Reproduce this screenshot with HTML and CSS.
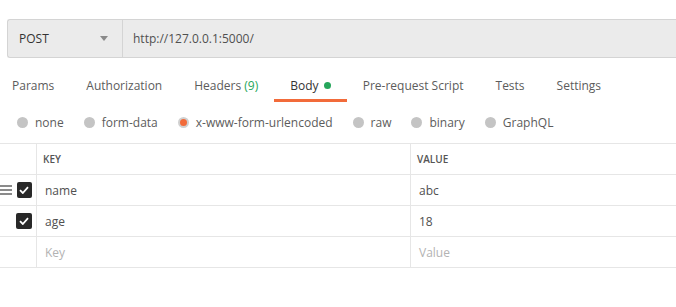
FILE: index.html
```html
<!DOCTYPE html>
<html lang="en">
<head>
    <meta charset="UTF-8">
    <meta name="viewport" content="width=device-width, initial-scale=1.0">
    <title>Request Body</title>
    <link rel="stylesheet" href="styles.css">
</head>
<body>

    <div class="url-bar">
        <div class="method">
            <span>POST</span>
            <span class="caret"></span>
        </div>
        <div class="url">http://127.0.0.1:5000/</div>
    </div>

    <div class="tabs">
        <div class="tab">Params</div>
        <div class="tab">Authorization</div>
        <div class="tab">Headers <span class="count">(9)</span></div>
        <div class="tab active">Body <span class="dot"></span></div>
        <div class="tab">Pre-request Script</div>
        <div class="tab">Tests</div>
        <div class="tab">Settings</div>
    </div>

    <div class="body-types">
        <label class="radio"><span class="circle"></span>none</label>
        <label class="radio"><span class="circle"></span>form-data</label>
        <label class="radio"><span class="circle selected"></span>x-www-form-urlencoded</label>
        <label class="radio"><span class="circle"></span>raw</label>
        <label class="radio"><span class="circle"></span>binary</label>
        <label class="radio"><span class="circle"></span>GraphQL</label>
    </div>

    <div class="kv-table">
        <div class="cell check"></div>
        <div class="cell head">KEY</div>
        <div class="cell head last">VALUE</div>

        <div class="cell check">
            <span class="drag"><i></i><i></i><i></i></span>
            <span class="box">
                <svg width="10" height="8" viewBox="0 0 10 8"><path d="M1 4.2 L3.8 7 L9 1.2" fill="none" stroke="#fff" stroke-width="1.8"/></svg>
            </span>
        </div>
        <div class="cell">name</div>
        <div class="cell last">abc</div>

        <div class="cell check">
            <span class="box">
                <svg width="10" height="8" viewBox="0 0 10 8"><path d="M1 4.2 L3.8 7 L9 1.2" fill="none" stroke="#fff" stroke-width="1.8"/></svg>
            </span>
        </div>
        <div class="cell">age</div>
        <div class="cell last">18</div>

        <div class="cell check"></div>
        <div class="cell placeholder">Key</div>
        <div class="cell placeholder last">Value</div>
    </div>

</body>
</html>
```

FILE: styles.css
```css
body {
    font-family: 'Open Sans', sans-serif;
    font-size: 12px;
    background-color: #fff;
    color: #505050;
    margin: 0;
    padding: 0;
    overflow: hidden;
}

.url-bar {
    display: flex;
    height: 37px;
    margin: 19px 0 0 7px;
    background-color: #ebebeb;
    border: 1px solid #d4d4d4;
    border-right: none;
    border-radius: 3px 0 0 3px;
}

.method {
    display: flex;
    align-items: center;
    justify-content: space-between;
    width: 115px;
    padding: 0 14px 0 11px;
    box-sizing: border-box;
    border-right: 1px solid #d4d4d4;
    color: #333;
}

.caret {
    width: 0;
    height: 0;
    border-left: 4px solid transparent;
    border-right: 4px solid transparent;
    border-top: 5px solid #8a8a8a;
}

.url {
    display: flex;
    align-items: center;
    padding-left: 10px;
}

.tabs {
    display: flex;
    margin-top: 15px;
    height: 29px;
}

.tab {
    padding: 0 16px;
    line-height: 26px;
    color: #5c5c5c;
    border-bottom: 3px solid transparent;
}

    .tab:first-child {
        padding-left: 12px;
    }

    .tab.active {
        color: #333;
        border-bottom-color: #f26b3a;
    }

.count {
    color: #26a65b;
}

.dot {
    display: inline-block;
    width: 7px;
    height: 7px;
    margin-left: 2px;
    border-radius: 50%;
    background-color: #26a65b;
    vertical-align: 1px;
}

.body-types {
    display: flex;
    align-items: center;
    height: 41px;
    padding-left: 17px;
}

.radio {
    display: flex;
    align-items: center;
    margin-right: 20px;
    color: #5c5c5c;
}

.circle {
    width: 11px;
    height: 11px;
    margin-right: 7px;
    border-radius: 50%;
    background-color: #c4c4c4;
    box-sizing: border-box;
}

    .circle.selected {
        background-color: #f26b3a;
        border: 2px solid #d0d0d0;
    }

.kv-table {
    display: grid;
    grid-template-columns: 37px 374px 1fr;
    grid-auto-rows: 31px;
    border-top: 1px solid #e6e6e6;
}

.cell {
    display: flex;
    align-items: center;
    padding-left: 8px;
    border-bottom: 1px solid #e6e6e6;
    border-right: 1px solid #e6e6e6;
    box-sizing: border-box;
}

    .cell.last {
        border-right: none;
    }

    .cell.head {
        padding-left: 6px;
        font-size: 10px;
        font-weight: 600;
        color: #555;
    }

    .cell.placeholder {
        color: #b3b3b3;
    }

    .cell.check {
        justify-content: flex-end;
        padding: 0 4px 0 0;
    }

.drag {
    display: flex;
    flex-direction: column;
    gap: 2.5px;
    width: 12px;
    margin-right: 5px;
}

    .drag i {
        display: block;
        height: 1.5px;
        background-color: #8a8a8a;
    }

.box {
    display: flex;
    align-items: center;
    justify-content: center;
    width: 16px;
    height: 16px;
    border-radius: 2px;
    background-color: #282828;
}
```
